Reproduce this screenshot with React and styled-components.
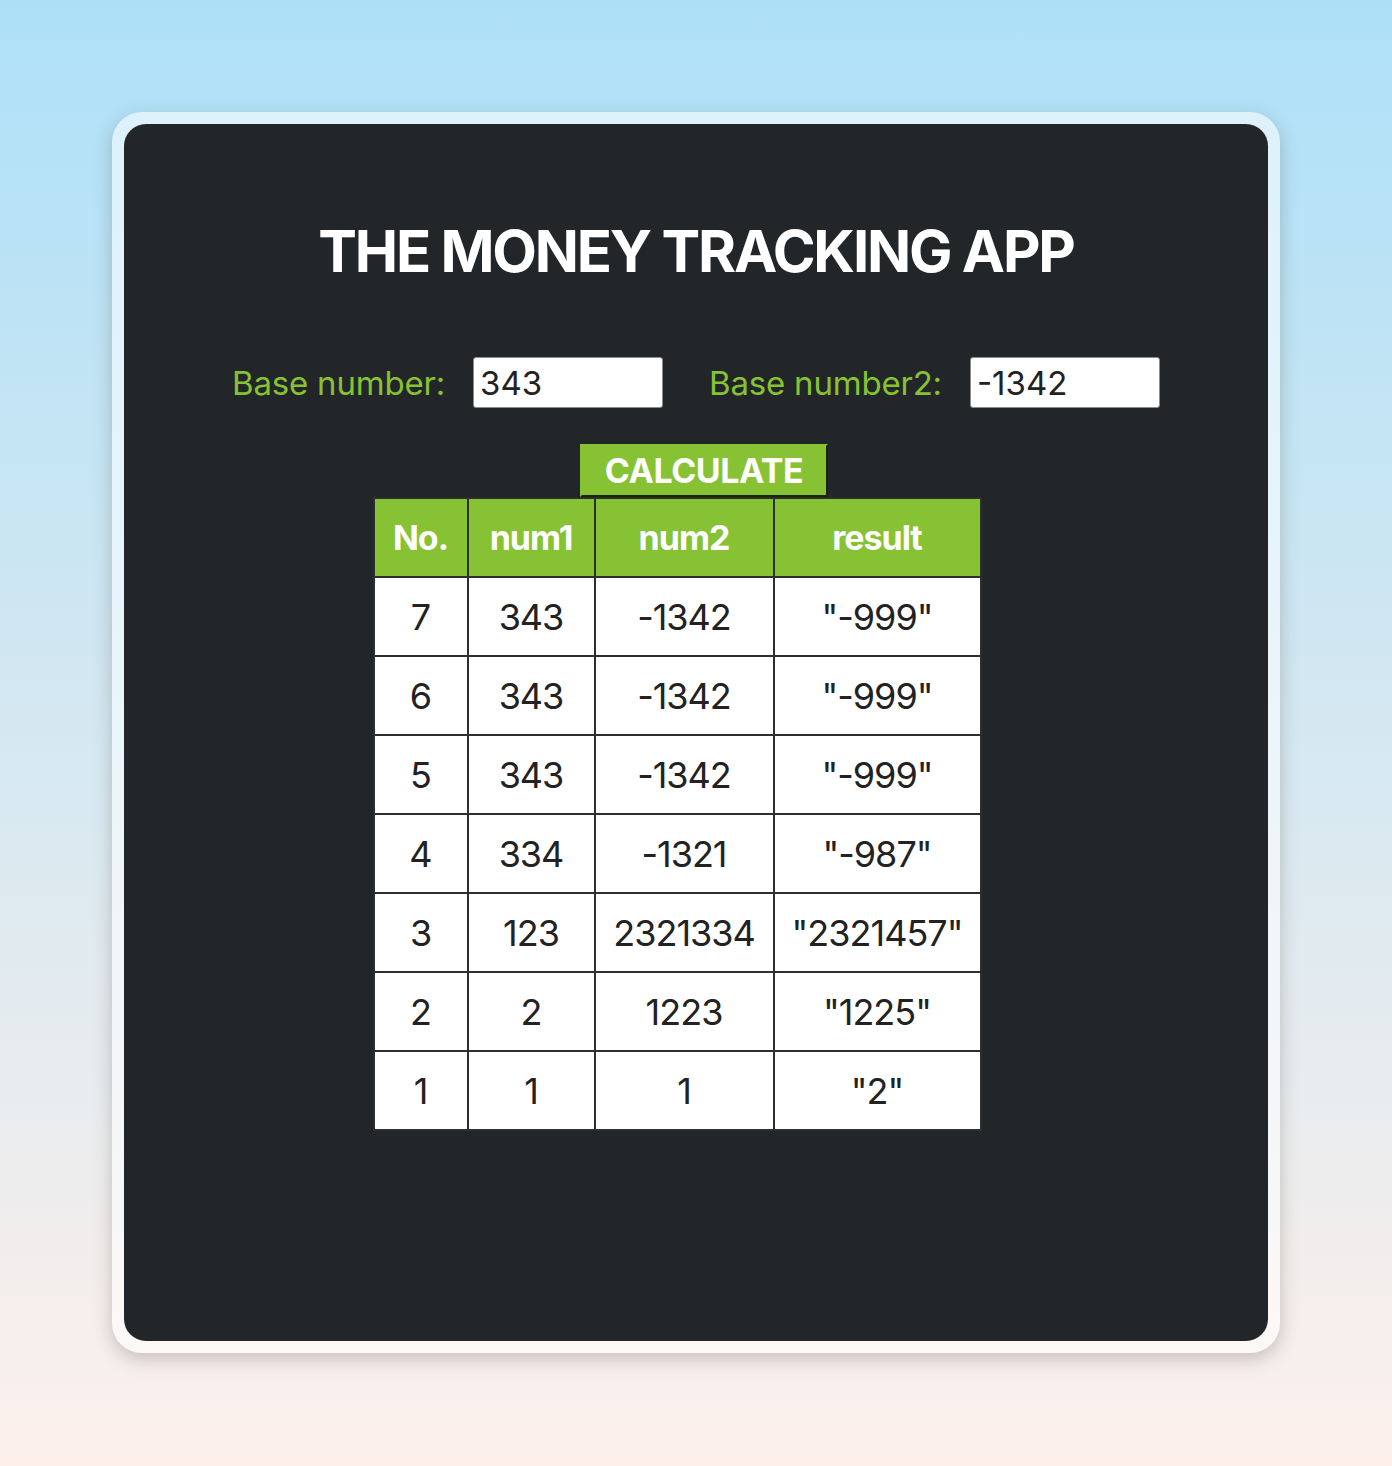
import React, { useState } from 'react';
import styled, { createGlobalStyle } from 'styled-components';

const GlobalStyle = createGlobalStyle`
  html, body {
    margin: 0;
    padding: 0;
  }
  body {
    min-height: 1466px;
    background: linear-gradient(180deg, #ade0f8 0%, #fdf0eb 100%);
    font-family: Inter, "Noto Sans", sans-serif;
  }
`;

const Page = styled.div`
  padding: 112px 112px 112px;
`;

const Frame = styled.div`
  padding: 12px;
  border-radius: 30px;
  background: rgba(255, 255, 255, 0.55);
  box-shadow: 0 6px 18px rgba(60, 50, 40, 0.25);
`;

const Panel = styled.div`
  background: #232629;
  border-radius: 22px;
  height: 1217px;
  box-sizing: border-box;
  padding-top: 91px;
  display: flex;
  flex-direction: column;
  align-items: center;
`;

const Title = styled.h1`
  margin: 0;
  color: #ffffff;
  font-size: 58px;
  font-weight: 700;
  letter-spacing: -2.2px;
  line-height: 72px;
`;

const InputRow = styled.div`
  margin-top: 70px;
  display: flex;
  align-items: center;
  gap: 46px;
`;

const Field = styled.label`
  display: flex;
  align-items: center;
  gap: 28px;
  color: #86c233;
  font-size: 33px;
  letter-spacing: -0.2px;
`;

const NumberInput = styled.input`
  width: 190px;
  height: 51px;
  box-sizing: border-box;
  border: 1px solid #8a8d90;
  border-radius: 3px;
  padding: 0 6px;
  font-family: Inter, "Noto Sans", sans-serif;
  font-size: 33px;
  color: #222;
  background: #fff;
  outline: none;
`;

const CalcButton = styled.button`
  margin-top: 36px;
  margin-left: 16px;
  width: 248px;
  height: 53px;
  background: #86c233;
  color: #fff;
  font-family: Inter, "Noto Sans", sans-serif;
  font-weight: 700;
  font-size: 34px;
  letter-spacing: -0.5px;
  border: 2px outset #86c233;
  border-right-color: #4f7a1e;
  border-bottom-color: #4f7a1e;
  padding: 0;
  cursor: pointer;
`;

const Table = styled.table`
  margin-top: 0;
  margin-right: 38px;
  border-collapse: collapse;
  font-size: 36px;
`;

const HeadCell = styled.th`
  background: #86c233;
  color: #fff;
  font-weight: 700;
  font-size: 34px;
  height: 79px;
  width: ${(p) => p.$w}px;
  border: 2px solid #2b2f32;
  padding: 0;
  box-sizing: border-box;
  letter-spacing: -1px;
`;

const Cell = styled.td`
  background: #fff;
  color: #222;
  height: 79px;
  text-align: center;
  border: 2px solid #2b2f32;
  padding: 0;
  box-sizing: border-box;
  letter-spacing: -1px;
`;

const widths = [94, 127, 179, 207];
const headers = ['No.', 'num1', 'num2', 'result'];

const initialRows = [
  [7, 343, -1342, '"-999"'],
  [6, 343, -1342, '"-999"'],
  [5, 343, -1342, '"-999"'],
  [4, 334, -1321, '"-987"'],
  [3, 123, 2321334, '"2321457"'],
  [2, 2, 1223, '"1225"'],
  [1, 1, 1, '"2"'],
];

export default function App() {
  const [a, setA] = useState('343');
  const [b, setB] = useState('-1342');
  const [rows, setRows] = useState(initialRows);

  const calculate = () => {
    const sum = Number(a) + Number(b);
    setRows([[rows.length + 1, Number(a), Number(b), `"${sum}"`], ...rows]);
  };

  return (
    <>
      <GlobalStyle />
      <Page>
        <Frame>
          <Panel>
            <Title>THE MONEY TRACKING APP</Title>
            <InputRow>
              <Field>
                Base number:
                <NumberInput value={a} onChange={(e) => setA(e.target.value)} />
              </Field>
              <Field>
                Base number2:
                <NumberInput value={b} onChange={(e) => setB(e.target.value)} />
              </Field>
            </InputRow>
            <CalcButton onClick={calculate}>CALCULATE</CalcButton>
            <Table>
              <thead>
                <tr>
                  {headers.map((h, i) => (
                    <HeadCell key={h} $w={widths[i]}>{h}</HeadCell>
                  ))}
                </tr>
              </thead>
              <tbody>
                {rows.map((r) => (
                  <tr key={r[0]}>
                    {r.map((v, i) => (
                      <Cell key={i}>{v}</Cell>
                    ))}
                  </tr>
                ))}
              </tbody>
            </Table>
          </Panel>
        </Frame>
      </Page>
    </>
  );
}
